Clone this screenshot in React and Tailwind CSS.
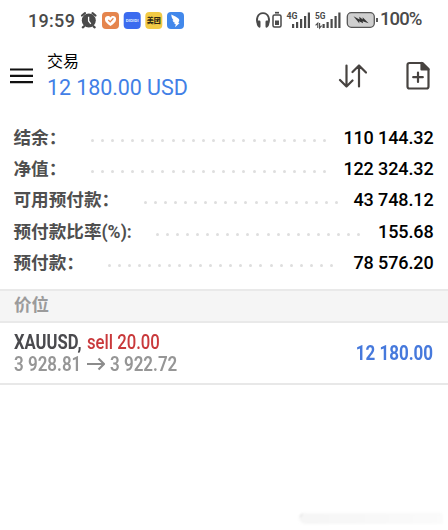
import React from "react";

const ROWS = [
  { label: "结余：", value: "110 144.32", dots: 24, lead: "w-[77px]", run: "w-[236px]" },
  { label: "净值：", value: "122 324.32", dots: 24, lead: "w-[77px]", run: "w-[236px]" },
  { label: "可用预付款：", value: "43 748.12", dots: 20, lead: "w-[130px]", run: "w-[195px]" },
  { label: "预付款比率(%):", value: "155.68", dots: 21, lead: "w-[142px]", run: "w-[205px]" },
  { label: "预付款：", value: "78 576.20", dots: 23, lead: "w-[94px]", run: "w-[226px]" },
];

function StatusIcons() {
  return (
    <svg width="190" height="30" viewBox="78 5 190 30" className="shrink-0">
      <g fill="none" stroke="#4a4a4a" strokeWidth="2.2" strokeLinecap="round">
        <path d="M82 15.5l3-2.3M95.5 15.5l-3-2.3M84 26.3l-1.2 1M93.5 26.3l1.2 1" />
      </g>
      <circle cx="88.8" cy="20.5" r="7" fill="#4a4a4a" />
      <path d="M88.6 16.8v4.2l2.2 2.8" fill="none" stroke="#fff" strokeWidth="1.3" />
      <rect x="102" y="12" width="17" height="17" rx="4" fill="#e5854d" />
      <path d="M110.5 26c-3-2-5.6-4-5.6-6.7 0-3.6 4-4.3 5.6-1.8 1.6-2.5 5.6-1.8 5.6 1.8 0 2.7-2.6 4.7-5.6 6.7z" fill="#fff" />
      <path d="M108.3 20l1.900 1.900 3.200-3.600" fill="none" stroke="#e5854d" strokeWidth="1.300" />
      <rect x="123.700" y="12" width="17" height="17" rx="4" fill="#3b6bef" />
      <text x="132.200" y="21.700" textAnchor="middle" fontFamily="Roboto" fontSize="3.700" fontWeight="700" fill="#dce7ff" textLength="13" lengthAdjust="spacingAndGlyphs">DIDIDI</text>
      <rect x="145.300" y="12" width="17" height="17" rx="4" fill="#f2ca45" />
      <text x="153.800" y="22.900" textAnchor="middle" fontFamily="Noto Sans CJK SC" fontSize="7" fontWeight="900" fill="#2d2814">美团</text>
      <rect x="167" y="12" width="17" height="17" rx="4" fill="#4288eb" />
      <path d="M171.300 14.500c2.500 1.500 6 2.600 7.600 4.600.8 1.200.1 2.600-.7 3.700l1.400.2-4.500 4.200.7-3-1.700-.5 1-1c-1.600-.3-2.300-1.300-2.500-2.500l1 .1c-1.500-1.500-2.200-3.200-2.300-5.800z" fill="#fff" />
    </svg>
  );
}

function SignalIcons() {
  return (
    <svg width="126" height="30" viewBox="254 5 126 30" className="shrink-0">
      <path d="M258.500 24.500c-3.300-4.500-1-11.300 4.500-11.300s7.800 6.800 4.500 11.300" fill="none" stroke="#4a4a4a" strokeWidth="1.800" />
      <path d="M257 20.500h2.200q1.300 0 1.300 1.300v4.700q0 1.200-1.300 1.200-3.400-2-2.200-7.200zM269 20.500h-2.200q-1.300 0-1.300 1.300v4.700q0 1.200 1.300 1.200 3.400-2 2.200-7.200z" fill="#4a4a4a" />
      <path d="M275 12.700h4" stroke="#4a4a4a" strokeWidth="1.700" />
      <rect x="273" y="15" width="8" height="12" rx="1.500" fill="none" stroke="#4a4a4a" strokeWidth="1.500" />
      <rect x="275" y="20.500" width="4" height="4.500" fill="#4a4a4a" />
      <g fill="#4a4a4a">
        <text x="286.500" y="19.400" fontFamily="Roboto" fontSize="9.500" fontWeight="700" textLength="11" lengthAdjust="spacingAndGlyphs">4G</text>
        <text x="315" y="19.400" fontFamily="Roboto" fontSize="9.500" fontWeight="700" textLength="10.500" lengthAdjust="spacingAndGlyphs">5G</text>
        <path d="M292 24h2.200v4H292zM296 22h2.200v6H296zM300 19h2.200v9H300zM304 16h2.200v12H304zM307.800 12.500h2.200v15.500h-2.200z" />
        <path d="M322.500 24h2.200v4h-2.200zM326.500 22h2.200v6h-2.200zM330.500 19h2.200v9h-2.200zM334.500 16h2.200v12h-2.200zM338.300 12.500h2.200v15.500h-2.200z" />
      </g>
      <path d="M317.800 28v-5l-2.200 2.300M319.600 23v5l2-2.300" fill="none" stroke="#4a4a4a" strokeWidth="1.100" />
      <rect x="347.300" y="12.700" width="27" height="14.600" rx="4" fill="#cfcfcf" stroke="#555" strokeWidth="1.300" />
      <path d="M353.500 16.300l6 3.300-.2-2.800 3.500 2.800-.2-2.400 6 6-6-2 .5 2-4-2 .3 2.300z" fill="#353535" />
      <path d="M377 18v4" stroke="#4a4a4a" strokeWidth="1.800" />
    </svg>
  );
}

function DotLeader({ count, width }) {
  return (
    <div className={"mt-[5px] flex shrink-0 justify-between " + width}>
      {Array.from({ length: count }, (_, i) => (
        <span key={i} className="size-[3px] rounded-full bg-[#dedede]" />
      ))}
    </div>
  );
}

export default function App() {
  return (
    <div className="h-[530px] w-[448px] overflow-hidden bg-white font-['Roboto','Noto_Sans_CJK_SC',sans-serif]">
      <div className="flex h-[40px] items-center whitespace-nowrap text-[#4a4a4a]">
        <div className="ml-[28px] w-[50px] text-[18px] font-medium tracking-[0.3px]">19:59</div>
        <div className="w-[176px] overflow-hidden"><StatusIcons /></div>
        <SignalIcons />
        <div className="text-[18.500px] font-medium tracking-[-0.900px]">100%</div>
      </div>

      <header className="flex h-[76px] items-start">
        <svg width="23" height="18" viewBox="0 0 23 18" className="ml-[10px] mt-[27px]" stroke="#111" strokeWidth="2.200">
          <path d="M0 2.500h23M0 8.800h23M0 15.100h23" />
        </svg>
        <div className="ml-[14px] mt-[11px] w-[290px] whitespace-nowrap">
          <div className="text-[16px] leading-[22px] text-black">交易</div>
          <div className="text-[21.500px] leading-[30px] tracking-[-0.080px] text-[#4280e6]">12 180.00 USD</div>
        </div>
        <svg width="30" height="26" viewBox="337 63 30 26" className="mt-[23px]" fill="none" stroke="#474340" strokeWidth="2.200" strokeLinecap="round" strokeLinejoin="round">
          <path d="M346.500 65.500v21M340 80l6.500 6.500 6-6M359 86.500v-21M352.500 72l6.500-6.500 7 7" />
        </svg>
        <svg width="26" height="30" viewBox="405 61 26 30" className="ml-[38px] mt-[21px]" fill="none" stroke="#474340" strokeWidth="2.200" strokeLinejoin="round">
          <path d="M409.500 63h13l6 6v17.500q0 2-2 2h-17q-2 0-2-2V65q0-2 2-2z" />
          <path d="M421.500 63v6.500h7z" fill="#474340" />
          <path d="M418 72.500v9.500M413.200 77.200h9.600" strokeLinecap="round" />
        </svg>
      </header>

      <div className="flex h-[173px] flex-col pt-[6px]">
        {ROWS.map((r) => (
          <div key={r.label} className="flex h-[31.350px] items-center whitespace-nowrap pl-[13.500px] pr-[14.500px]">
            <div className={"shrink-0 text-[17.600px] font-bold leading-[30px] text-[#4f4f4f] " + r.lead}>{r.label}</div>
            <DotLeader count={r.dots} width={r.run} />
            <div className="ml-auto text-[18px] font-medium leading-[30px] tracking-[-0.120px] text-black">{r.value}</div>
          </div>
        ))}
      </div>

      <div className="h-[34px] border-y-2 border-[#e9e9e9] bg-[#f5f5f5] pl-[14px] text-[17.500px] font-bold leading-[28px] text-[#9b9b9b]">价位</div>

      <div className="flex h-[62px] items-center justify-between whitespace-nowrap border-b-2 border-[#e8e8e8] pl-[14px] pr-[14.500px]">
        <div className="text-[20px] leading-[22px]">
          <div className="flex">
            <div className="w-[73px]"><span className="inline-block origin-left scale-x-[0.83] font-bold text-[#4a4a4e]">XAUUSD,</span></div>
            <span className="inline-block origin-left scale-x-[0.835] font-medium text-[#c9393b]">sell 20.00</span>
          </div>
          <div className="flex items-center font-semibold text-[#969696]">
            <div className="w-[73px]"><span className="inline-block origin-left scale-x-[0.85]">3 928.81</span></div>
            <svg width="18" height="14" viewBox="0 0 18 14" className="mr-[5px]" fill="none" stroke="#8c8c8c" strokeWidth="2.200"><path d="M0 7h17M11.500 1.500L17 7l-5.500 5.500" /></svg>
            <span className="inline-block origin-left scale-x-[0.85]">3 922.72</span>
          </div>
        </div>
        <span className="inline-block origin-right scale-x-[0.85] text-[20px] font-bold text-[#4679dc]">12 180.00</span>
      </div>

      <div className="flex h-[145px] items-end justify-end pb-[6px] pr-[5px]">
        <div className="h-[10px] w-[143px] rounded-l-full bg-linear-to-r from-[#f6f6f6] via-[#f8f8f8] to-[#fbfbfb] shadow-[-1px_-1px_1px_-1px_#aaa] blur-[1px]" />
      </div>
    </div>
  );
}
